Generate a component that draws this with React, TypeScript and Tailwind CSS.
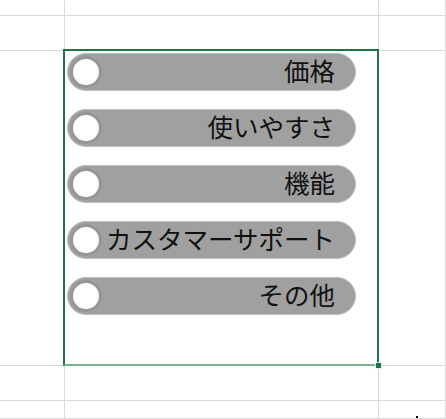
const items = ['価格', '使いやすさ', '機能', 'カスタマーサポート', 'その他'];

function Toggle({ label }: { label: string }) {
  return (
    <div className="flex h-[38px] w-[289px] items-center rounded-full border border-[#bdbdbd] bg-[#a0a0a0] pl-[2px] pr-[20px]">
      <div className="h-[32px] w-[32px] shrink-0 rounded-full border-[3px] border-[#969696] bg-white" />
      <div className="flex-1 pb-[4px] text-right text-[25.5px] leading-none whitespace-nowrap text-[#111]">
        {label}
      </div>
    </div>
  );
}

export default function App() {
  return (
    <div
      className="relative h-[419px] w-[446px] overflow-hidden bg-white"
      style={{ fontFamily: '"Noto Sans CJK JP", "Noto Sans", sans-serif' }}
    >
      {/* sheet grid */}
      <div className="grid h-full grid-cols-[65px_314px_1fr] grid-rows-[16px_35px_315px_35px_1fr]">
        {Array.from({ length: 15 }, (_, i) => (
          <div key={i} className="border-r border-b border-[#dadada]" />
        ))}
      </div>

      {/* selected shape group */}
      <div className="absolute top-[49px] left-[63px] h-[317px] w-[316px] border-2 border-[#217346] border-b-[#7db08f]">
        <div className="flex flex-col gap-[18px] pt-[2px] pl-[2px]">
          {items.map(label => (
            <Toggle key={label} label={label} />
          ))}
        </div>
        <div className="absolute -right-[5px] -bottom-[5px] h-[7px] w-[7px] border border-[#e8f0ea] bg-[#217346]" />
      </div>

      <div className="absolute top-[416px] left-[416px] h-[2px] w-[2px] bg-black" />
    </div>
  );
}
